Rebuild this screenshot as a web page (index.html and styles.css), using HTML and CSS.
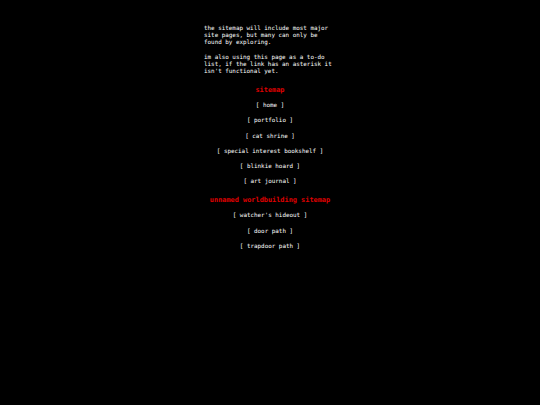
FILE: index.html
```html
<!DOCTYPE html>
<html>
<head>
<meta charset="utf-8">
<link rel="stylesheet" href="styles.css">
</head>
<body>
<div class="page">
  <p class="intro">the sitemap will include most major site pages, but many can only be found by exploring.</p>
  <p class="intro">im also using this page as a to-do list, if the link has an asterisk it isn't functional yet.</p>
  <h2 class="head">sitemap</h2>
  <ul class="links">
    <li><a href="#">[ home ]</a></li>
    <li><a href="#">[ portfolio ]</a></li>
    <li><a href="#">[ cat shrine ]</a></li>
    <li><a href="#">[ special interest bookshelf ]</a></li>
    <li><a href="#">[ blinkie hoard ]</a></li>
    <li><a href="#">[ art journal ]</a></li>
  </ul>
  <h2 class="head head2">unnamed worldbuilding sitemap</h2>
  <ul class="links">
    <li><a href="#">[ watcher's hideout ]</a></li>
    <li><a href="#">[ door path ]</a></li>
    <li><a href="#">[ trapdoor path ]</a></li>
  </ul>
</div>
</body>
</html>
```
FILE: styles.css
```css
html, body {
  margin: 0;
  padding: 0;
  background: #000;
  height: 100%;
}
body {
  color: #fff;
  font-family: "DejaVu Sans Mono", "Liberation Mono", monospace;
  font-size: 5.9px;
  line-height: 7px;
}
.page {
  width: 132px;
  margin: 0 auto;
  padding-top: 25px;
}
.intro {
  margin: 0 0 8px 0;
}
.head {
  color: #e00000;
  font-size: 6.9px;
  line-height: 8px;
  font-weight: bold;
  text-align: center;
  margin: 11px -40px 0;
}
.head2 {
  margin-top: 11px;
}
.links {
  list-style: none;
  margin: 8px -40px 0;
  padding: 0;
  text-align: center;
  display: flex;
  flex-direction: column;
  gap: 8.3px;
}
.links a {
  color: #fff;
  text-decoration: none;
}
```
